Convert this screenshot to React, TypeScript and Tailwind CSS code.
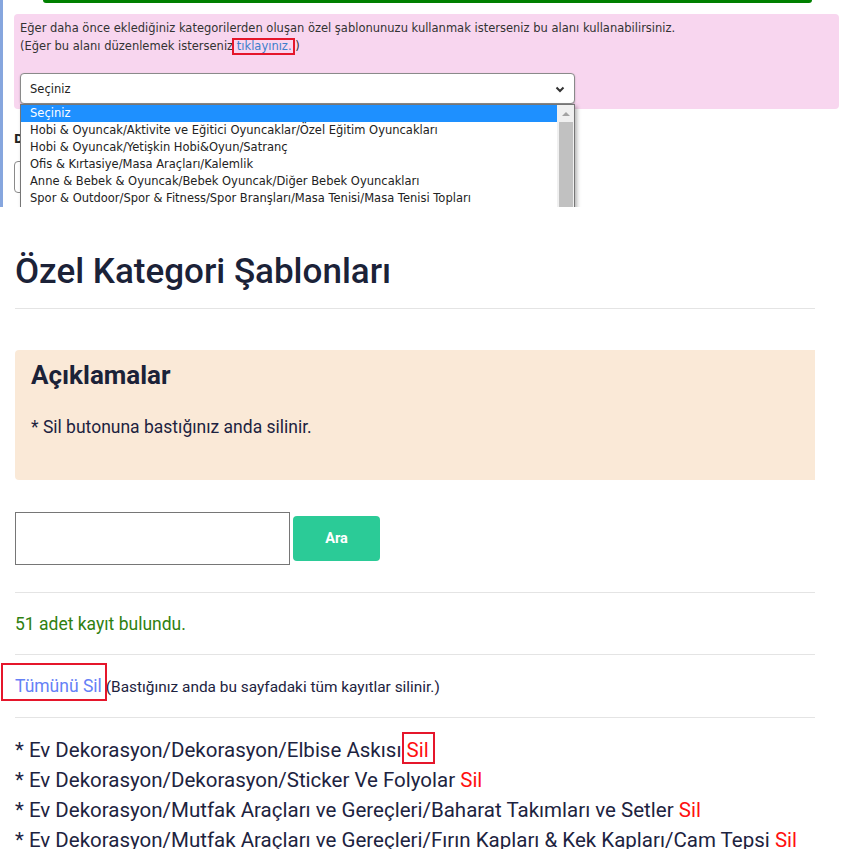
import React from "react";

const options = [
  "Seçiniz",
  "Hobi & Oyuncak/Aktivite ve Eğitici Oyuncaklar/Özel Eğitim Oyuncakları",
  "Hobi & Oyuncak/Yetişkin Hobi&Oyun/Satranç",
  "Ofis & Kırtasiye/Masa Araçları/Kalemlik",
  "Anne & Bebek & Oyuncak/Bebek Oyuncak/Diğer Bebek Oyuncakları",
  "Spor & Outdoor/Spor & Fitness/Spor Branşları/Masa Tenisi/Masa Tenisi Topları",
  "Ev & Mobilya/Ev Tekstili/Nevresim Takımı",
];

const records = [
  "Ev Dekorasyon/Dekorasyon/Elbise Askısı",
  "Ev Dekorasyon/Dekorasyon/Sticker Ve Folyolar",
  "Ev Dekorasyon/Mutfak Araçları ve Gereçleri/Baharat Takımları ve Setler",
  "Ev Dekorasyon/Mutfak Araçları ve Gereçleri/Fırın Kapları & Kek Kapları/Cam Tepsi",
];

const TemplateSelect = () => {
  return (
    <div className="h-[207px] overflow-hidden border-l-[3px] border-[#86a6de] font-['DejaVu_Sans',Verdana,sans-serif] text-[11.5px]">
      <div className="ml-[40px] w-[769px] h-[3px] bg-[#008000] rounded-b-[3px]" />
      <div className="ml-[11px] mt-[11px] w-[825px] bg-[#f8d6ef] rounded-[4px] px-[6px] pt-[5px] pb-[5px] text-[#333] leading-[18px]">
        <p>
          Eğer daha önce eklediğiniz kategorilerden oluşan özel şablonunuzu
          kullanmak isterseniz bu alanı kullanabilirsiniz.
        </p>
        <p>
          (Eğer bu alanı düzenlemek isterseniz{" "}
          <span className="relative text-[#3d7ecb]">
            tıklayınız.
            <span className="absolute -left-[5px] -right-[3px] -top-[1px] -bottom-[2px] border-[2px] border-[#e5162b]" />
          </span>{" "}
          )
        </p>
        <div className="relative mt-[18px] w-[555px] z-10">
          <div className="h-[31px] bg-white border border-[#8a8a8a] rounded-[4px] shadow-[0_1px_2px_rgba(0,0,0,0.25)] flex items-center justify-between pl-[9px] pr-[8px] text-[#222]">
            <span>Seçiniz</span>
            <svg width="12" height="12" viewBox="0 0 12 12">
              <path d="M2.5 4.5 L6 8 L9.5 4.5" stroke="#333" strokeWidth="2" fill="none" />
            </svg>
          </div>
          <div className="absolute left-0 top-full w-full bg-white border border-[#767676] shadow-[2px_2px_4px_rgba(0,0,0,0.3)] flex">
            <div className="flex-1">
              {options.map((o, i) => (
                <div
                  key={o}
                  className={
                    i === 0
                      ? "h-[17px] leading-[17px] pl-[9px] bg-[#1e90ff] text-white"
                      : "h-[17px] leading-[17px] pl-[9px] text-[#222]"
                  }
                >
                  {o}
                </div>
              ))}
            </div>
            <div className="w-[17px] bg-[#f0f0f0] flex flex-col items-center">
              <div className="h-[17px] flex items-center justify-center">
                <div className="w-0 h-0 border-l-[4px] border-r-[4px] border-b-[4px] border-transparent border-b-[#a3a3a3]" />
              </div>
              <div className="w-[14px] flex-1 bg-[#c1c1c1]" />
            </div>
          </div>
        </div>
      </div>
      <div className="ml-[11px] mt-[22px] font-bold text-[#222]">Dosya Adı</div>
      <div className="ml-[11px] mt-[13px] w-[500px] h-[32px] border border-[#8a8a8a] rounded-[4px] bg-white" />
    </div>
  );
};

const App = () => {
  return (
    <div className="w-[863px] h-[849px] overflow-hidden bg-white">
      <TemplateSelect />

      <div className="ml-[15px] w-[800px] font-['Roboto',sans-serif] text-[#1d2340]">
        <h1 className="mt-[44px] text-[35px] leading-[42px] font-medium text-[#1b2238]">
          Özel Kategori Şablonları
        </h1>
        <div className="mt-[15px] border-t border-[#e4e4e4]" />

        <div className="mt-[41px] h-[130px] bg-[#fae9d7] rounded-l-[4px] px-[16px] pt-[9px]">
          <h2 className="text-[26px] leading-[32px] font-bold text-[#1b2238]">
            Açıklamalar
          </h2>
          <p className="mt-[23px] text-[17.5px] leading-[26px]">
            * Sil butonuna bastığınız anda silinir.
          </p>
        </div>

        <div className="mt-[32px] flex items-center gap-[3px]">
          <input className="w-[275px] h-[53px] border border-[#767676] outline-none" />
          <button className="w-[87px] h-[45px] bg-[#2bcb97] rounded-[4px] text-white font-bold text-[14.5px]">
            Ara
          </button>
        </div>

        <div className="mt-[27px] border-t border-[#e4e4e4]" />
        <p className="pt-[19px] pb-[18px] text-[17.5px] leading-[24px] text-[#2f8010]">
          51 adet kayıt bulundu.
        </p>
        <div className="border-t border-[#e4e4e4]" />

        <p className="pt-[19px] pb-[18px] leading-[24px] text-[15.4px]">
          <span className="relative text-[17.5px] text-[#6581f6]">
            Tümünü Sil
            <span className="absolute -left-[14px] -right-[5px] -top-[13px] -bottom-[5px] border-[2px] border-[#e5162b]" />
          </span>
          <span className="ml-[4px]">(Bastığınız anda bu sayfadaki tüm kayıtlar silinir.)</span>
        </p>
        <div className="border-t border-[#e4e4e4]" />

        <ul className="mt-[17px] text-[20.5px] leading-[30px] whitespace-nowrap">
          {records.map((r, i) => (
            <li key={r}>
              * {r}{" "}
              <span className="relative text-[#ff1010]">
                Sil
                {i === 0 && (
                  <span className="absolute -left-[5px] -right-[6px] -top-[6px] -bottom-[2px] border-[2px] border-[#e5162b]" />
                )}
              </span>
            </li>
          ))}
        </ul>
      </div>
    </div>
  );
};

export default App;
